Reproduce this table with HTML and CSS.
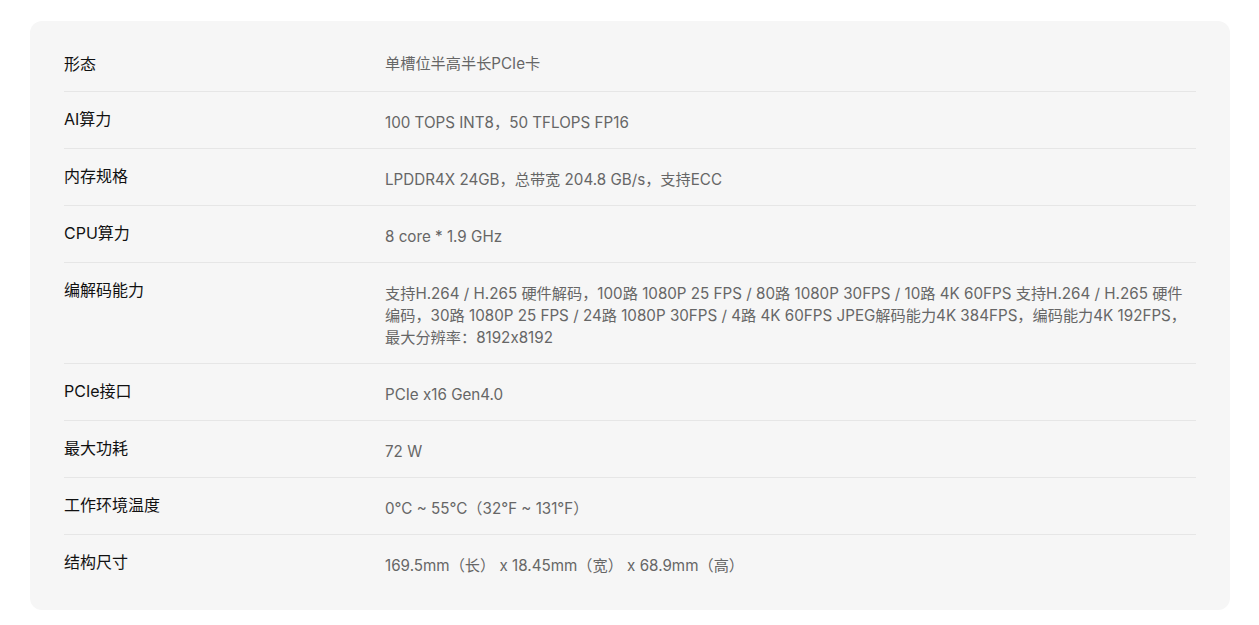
FILE: index.html
```html
<!DOCTYPE html>
<html lang="zh-CN">
<head>
<meta charset="utf-8">
<title>规格参数</title>
<link rel="stylesheet" href="styles.css">
</head>
<body>
<div class="page">
  <div class="spec-card">
    <div class="spec-row first">
      <div class="spec-label">形态</div>
      <div class="spec-value">单槽位半高半长PCIe卡</div>
    </div>
    <div class="spec-row">
      <div class="spec-label">AI算力</div>
      <div class="spec-value">100 TOPS INT8，50 TFLOPS FP16</div>
    </div>
    <div class="spec-row">
      <div class="spec-label">内存规格</div>
      <div class="spec-value">LPDDR4X 24GB，总带宽 204.8 GB/s，支持ECC</div>
    </div>
    <div class="spec-row">
      <div class="spec-label">CPU算力</div>
      <div class="spec-value">8 core * 1.9 GHz</div>
    </div>
    <div class="spec-row">
      <div class="spec-label">编解码能力</div>
      <div class="spec-value">支持H.264 / H.265 硬件解码，100路 1080P 25 FPS / 80路 1080P 30FPS / 10路 4K 60FPS 支持H.264 / H.265 硬件编码，30路 1080P 25 FPS / 24路 1080P 30FPS / 4路 4K 60FPS JPEG解码能力4K 384FPS，编码能力4K 192FPS，<br>最大分辨率：8192x8192</div>
    </div>
    <div class="spec-row">
      <div class="spec-label">PCIe接口</div>
      <div class="spec-value">PCIe x16 Gen4.0</div>
    </div>
    <div class="spec-row">
      <div class="spec-label">最大功耗</div>
      <div class="spec-value">72 W</div>
    </div>
    <div class="spec-row">
      <div class="spec-label">工作环境温度</div>
      <div class="spec-value">0℃ ~ 55℃（32℉ ~ 131℉）</div>
    </div>
    <div class="spec-row last">
      <div class="spec-label">结构尺寸</div>
      <div class="spec-value">169.5mm（长） x 18.45mm（宽） x 68.9mm（高）</div>
    </div>
  </div>
</div>
</body>
</html>
```

FILE: styles.css
```css
* { box-sizing: border-box; }
html, body { margin: 0; padding: 0; background: #ffffff; }
body {
  font-family: Inter, "Noto Sans CJK SC", sans-serif;
}
.page {
  padding: 21px 29px 0 30px;
}
.spec-card {
  background: #f6f6f6;
  border-radius: 12px;
  padding: 16px 34px 17px 34px;
}
.spec-row {
  display: grid;
  grid-template-columns: 321px 1fr;
  border-top: 1px solid #e6e6e6;
  padding: 15px 0 14px 0;
}
.spec-row.first {
  border-top: none;
  padding-bottom: 15px;
}
.spec-row.last {
  padding-bottom: 16px;
}
.spec-label {
  font-size: 16px;
  line-height: 24px;
  font-weight: 400;
  color: #111111;
}
.spec-value {
  font-size: 15.2px;
  line-height: 22px;
  color: #666666;
  padding: 5px 6px 0 0;
}
.spec-row.first .spec-value {
  padding-top: 1px;
}
```
